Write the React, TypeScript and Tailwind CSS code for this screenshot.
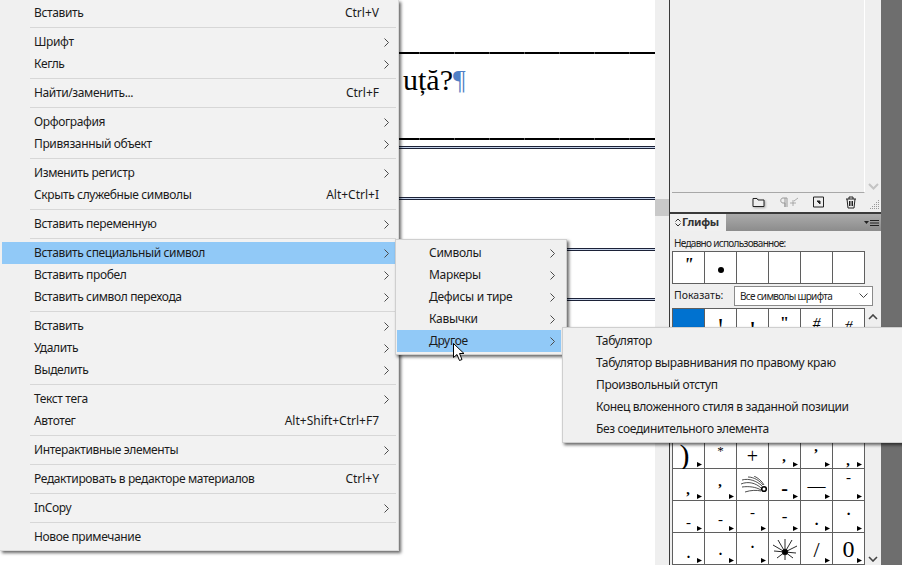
const mainMenu = [
  [{ t: "Вставить", k: "Ctrl+V" }],
  [{ t: "Шрифт", a: true }, { t: "Кегль", a: true }],
  [{ t: "Найти/заменить...", k: "Ctrl+F" }],
  [{ t: "Орфография", a: true }, { t: "Привязанный объект", a: true }],
  [{ t: "Изменить регистр", a: true }, { t: "Скрыть служебные символы", k: "Alt+Ctrl+I" }],
  [{ t: "Вставить переменную", a: true }],
  [{ t: "Вставить специальный символ", a: true, on: true }, { t: "Вставить пробел", a: true }, { t: "Вставить символ перехода", a: true }],
  [{ t: "Вставить", a: true }, { t: "Удалить", a: true }, { t: "Выделить", a: true }],
  [{ t: "Текст тега", a: true }, { t: "Автотег", k: "Alt+Shift+Ctrl+F7" }],
  [{ t: "Интерактивные элементы", a: true }],
  [{ t: "Редактировать в редакторе материалов", k: "Ctrl+Y" }],
  [{ t: "InCopy", a: true }],
  [{ t: "Новое примечание" }],
];

const subMenu = ["Символы", "Маркеры", "Дефисы и тире", "Кавычки", "Другое"];
const otherMenu = [
  "Табулятор",
  "Табулятор выравнивания по правому краю",
  "Произвольный отступ",
  "Конец вложенного стиля в заданной позиции",
  "Без соединительного элемента",
];

const Chevron = () => (
  <svg width="5" height="9" viewBox="0 0 5 9" className="shrink-0" fill="none" stroke="#4a4a4a" strokeWidth="1">
    <path d="M0.5 0.5 L4.5 4.5 L0.5 8.5" />
  </svg>
);

const Tri = () => (
  <svg width="5" height="5" viewBox="0 0 5 5" className="absolute right-[2px] bottom-[1px]">
    <path d="M0 0 L5 2.5 L0 5 Z" fill="#000" />
  </svg>
);

const Comet = () => (
  <svg width="28" height="20" viewBox="0 0 28 20" fill="none" stroke="#222" strokeWidth="0.8">
    <path d="M1 8 C8 5 16 7 21 12" />
    <path d="M2 4 C9 2 17 5 22 10" />
    <path d="M8 1 C14 1 20 5 23 9" />
    <path d="M14 0 C18 2 22 5 24 9" />
    <path d="M2 11 C9 10 16 11 21 14" />
    <path d="M5 16 C11 14 17 14 21 15" />
    <circle cx="24" cy="13" r="2.3" fill="#fff" stroke="#000" strokeWidth="1.6" />
  </svg>
);

const Burst = () => (
  <svg width="24" height="22" viewBox="0 0 24 22" stroke="#111" strokeWidth="0.9">
    <path d="M12 14 L12 1 M12 14 L5 2 M12 14 L19 2 M12 14 L0 7 M12 14 L24 8 M12 14 L1 13 M12 14 L23 15 M12 14 L4 20 M12 14 L20 20 M12 14 L12 22" />
    <circle cx="12" cy="14" r="2.8" fill="#000" />
  </svg>
);

const glyphFont = "font-['Liberation_Serif',serif] leading-none tracking-normal text-black";

const rows = [
  [
    { c: "bg-[#0072d0]" },
    { g: "!", c: "pt-[7px] text-[17px] font-bold" },
    { g: "!", c: "pt-[10px] text-[17px] font-bold" },
    { g: '"', c: "pt-[6px] text-[16px] font-bold" },
    { g: "#", c: "pt-[7px] text-[16px] italic" },
    { g: "#", c: "pt-[10px] text-[16px] italic" },
  ],
  [{}, {}, {}, {}, {}, {}],
  [{}, {}, {}, {}, {}, {}],
  [{}, {}, {}, {}, {}, {}],
  [
    { g: ")", c: "pt-[3px] pr-[8px] text-[30px] font-light", a: 1 },
    { g: "*", c: "pt-[7px] text-[13px] text-[#555]" },
    { g: "+", c: "pt-[9px] text-[20px]" },
    { g: ",", c: "pt-[12px] text-[15px] font-bold italic", a: 1 },
    { g: ",", c: "pt-[2px] text-[15px] font-bold italic", a: 1 },
    { g: ",", c: "pt-[16px] text-[15px] font-bold italic", a: 1 },
  ],
  [
    { g: ",", c: "pt-[13px] text-[15px] font-bold italic", a: 1 },
    { g: ",", c: "pt-[5px] text-[15px] font-bold italic", a: 1 },
    { s: "comet", c: "pt-[7px] pl-[2px]" },
    { g: "-", c: "pt-[9px] text-[20px] font-bold", a: 1 },
    { g: "—", c: "pt-[8px] text-[18px]", a: 1 },
    { g: "-", c: "pt-[1px] text-[15px] italic", a: 1 },
  ],
  [
    { g: "-", c: "pt-[14px] text-[15px] italic", a: 1 },
    { g: "-", c: "pt-[11px] text-[15px] italic", a: 1 },
    { g: "-", c: "pt-[4px] text-[15px] italic", a: 1 },
    { g: "-", c: "pt-[7px] text-[17px] italic", a: 1 },
    { g: ".", c: "pt-[12px] text-[15px] font-bold", a: 1 },
    { g: ".", c: "pt-[2px] text-[15px] font-bold", a: 1 },
  ],
  [
    { g: ".", c: "pt-[14px] text-[14px] font-bold", a: 1 },
    { g: ".", c: "pt-[11px] text-[14px] font-bold", a: 1 },
    { g: ".", c: "pt-[4px] text-[14px] font-bold", a: 1 },
    { s: "burst", c: "pt-[5px]" },
    { g: "/", c: "pt-[6px] text-[22px]", a: 1 },
    { g: "0", c: "pt-[4px] text-[24px]", a: 1 },
  ],
];

const Rule = () => (
  <div className="h-[2px] w-full bg-[repeating-linear-gradient(to_right,#000_0,#000_34px,#555_34px,#555_35px)]" />
);

const DoubleRule = () => (
  <div className="h-[3px] w-full border-y border-[#1c2238] bg-[#c4d2ea]" />
);

function MenuRow({ t, k, a, on }: { t: string; k?: string; a?: boolean; on?: boolean }) {
  return (
    <div className={`flex h-[22px] items-center pl-[32px] pr-[7px] ${on ? "bg-[#91c9f7]" : ""}`}>
      <span className="flex-1 whitespace-nowrap tracking-[-0.37px]">{t}</span>
      {k && <span className="mr-[10px]">{k}</span>}
      {a && <Chevron />}
    </div>
  );
}

export default function App() {
  return (
    <div className="relative flex h-[565px] w-[902px] overflow-hidden bg-white font-['Noto_Sans',sans-serif] text-[12px] text-[#1b1b1b]">
      {/* document */}
      <div className="flex w-[655px] shrink-0 flex-col">
        <div className="mt-[52px]"><Rule /></div>
        <div className="flex h-[84px] items-start pl-[403px] pt-[8px] font-['Liberation_Serif',serif] text-[30px] leading-[36px] text-black">
          <span>uță?</span>
          <span className="mt-[2px] text-[28px] leading-[32px] text-[#4f7fc6]">¶</span>
        </div>
        <Rule />
        <div className="mt-[6px]"><DoubleRule /></div>
        <div className="mt-[48px]"><DoubleRule /></div>
        <div className="mt-[48px]"><DoubleRule /></div>
        <div className="mt-[47px]"><DoubleRule /></div>
      </div>

      {/* doc scrollbar */}
      <div className="w-[14px] shrink-0 bg-[#efefef] pt-[199px]">
        <div className="h-[17px] bg-[#c9c9c9]" />
      </div>

      {/* panels */}
      <div className="flex w-[212px] shrink-0 flex-col border-l border-[#3a3a3a] bg-[#efefef]">
        <div className="flex h-[195px] pl-[2px]">
          <div className="w-[193px] border-r border-b border-r-white border-b-[#a8a8a8]" />
          <div className="flex flex-1 items-end justify-center pb-[3px]">
            <svg width="11" height="7" viewBox="0 0 11 7" fill="none" stroke="#c4c4c4" strokeWidth="2">
              <path d="M1 1 L5.5 5.5 L10 1" />
            </svg>
          </div>
        </div>
        <div className="relative flex h-[19px] items-center">
          <svg width="13" height="11" viewBox="0 0 13 11" className="ml-[82px] drop-shadow-[1px_1px_1px_rgba(0,0,0,0.3)]" fill="#eee" stroke="#222">
            <path d="M1 9.5 V1.5 H5 L6 3 H12 V9.5 Z" />
          </svg>
          <svg width="18" height="11" viewBox="0 0 18 11" className="ml-[15px]" fill="none" stroke="#999">
            <path d="M7 1 H3 C0 1 0 6 3 6 H5 V10 M5 1 V10 M7 1 V10" />
            <path d="M10 6 H16 M13 3 V9 M14 4 L18 1" strokeWidth="0.8" />
          </svg>
          <svg width="11" height="12" viewBox="0 0 11 12" className="ml-[15px]" fill="#eee" stroke="#222">
            <path d="M0.5 1 H10.5 V11 H0.5 Z" />
            <path d="M4 5 H7 V8 Z" fill="#222" />
          </svg>
          <svg width="12" height="13" viewBox="0 0 12 13" className="ml-[21px]" fill="#eee" stroke="#222">
            <path d="M1 3 H11 M4 3 V1 H8 V3 M2 3 L3 12 H9 L10 3 M4.5 5 V10 M6 5 V10 M7.5 5 V10" />
          </svg>
          <svg width="11" height="11" viewBox="0 0 11 11" className="absolute right-[1px] bottom-[2px]" fill="#999">
            <path d="M9 1h1v1H9zM7 3h1v1H7zM9 3h1v1H9zM5 5h1v1H5zM7 5h1v1H7zM9 5h1v1H9zM3 7h1v1H3zM5 7h1v1H5zM7 7h1v1H7zM9 7h1v1H9zM1 9h1v1H1zM3 9h1v1H3zM5 9h1v1H5zM7 9h1v1H7zM9 9h1v1H9z" />
          </svg>
        </div>
        <div className="h-[2px] bg-[#3a3a3a]" />
        <div className="flex h-[18px] bg-gradient-to-b from-[#ababab] to-[#8c8c8c]">
          <div className="flex w-[56px] items-center gap-[1px] bg-[#f0f0f0] pl-[5px] text-[11px] font-bold tracking-[-0.3px] text-[#333]">
            <svg width="6" height="9" viewBox="0 0 6 9" fill="none" stroke="#333">
              <path d="M0.5 3.5 L3 1 L5.5 3.5 M0.5 5.5 L3 8 L5.5 5.5" />
            </svg>
            Глифы
          </div>
          <div className="flex flex-1 items-center justify-end gap-[1px] pr-[2px]">
            <svg width="5" height="3" viewBox="0 0 5 3"><path d="M0 0 H5 L2.5 3 Z" fill="#222" /></svg>
            <svg width="9" height="8" viewBox="0 0 9 8" stroke="#222"><path d="M0 1.5 H9 M0 4 H9 M0 6.5 H9" /></svg>
          </div>
        </div>
        <div className="flex h-[20px] items-end pl-[4px] pb-[1px] text-[10px] leading-[14px] tracking-[-0.7px] text-[#222]">
          Недавно использованное:
        </div>
        <div className="ml-[2px] grid w-[193px] grid-cols-6 border-t border-l border-[#5f5f5f]">
          <div className={`flex h-[32px] justify-center border-r border-b border-[#5f5f5f] bg-white pt-[4px] text-[18px] font-bold italic ${glyphFont}`}>"</div>
          <div className="flex h-[32px] items-start justify-center border-r border-b border-[#5f5f5f] bg-white pt-[15px]">
            <div className="h-[6px] w-[6px] rounded-full bg-black" />
          </div>
          {[0, 1, 2, 3].map((i) => (
            <div key={i} className="h-[32px] border-r border-b border-[#5f5f5f] bg-white" />
          ))}
        </div>
        <div className="flex h-[24px] items-center pl-[4px] text-[10px] text-[#222]">
          <span className="w-[60px] text-[10.5px]">Показать:</span>
          <div className="flex h-[20px] w-[139px] items-center justify-between border border-[#8a8a8a] bg-white pl-[5px] pr-[4px] tracking-[-0.7px]">
            Все символы шрифта
            <svg width="9" height="6" viewBox="0 0 9 6" fill="none" stroke="#444"><path d="M0.5 0.5 L4.5 4.5 L8.5 0.5" /></svg>
          </div>
        </div>
        <div className="flex">
          <div className="ml-[2px] grid w-[193px] shrink-0 grid-cols-6 border-t border-l border-[#5f5f5f]">
            {rows.flat().map((cell: any, i) => (
              <div key={i} className={`relative flex h-[32px] justify-center border-r border-b border-[#5f5f5f] ${i === 0 ? "" : "bg-white"} ${glyphFont} ${cell.c ?? ""}`}>
                {cell.g}
                {cell.s === "comet" && <Comet />}
                {cell.s === "burst" && <Burst />}
                {cell.a && <Tri />}
              </div>
            ))}
          </div>
          <div className="flex h-[254px] flex-1 flex-col items-center justify-between pt-[6px]">
            <svg width="10" height="6" viewBox="0 0 10 6" fill="none" stroke="#444" strokeWidth="1.6"><path d="M1 5 L5 1 L9 5" /></svg>
            <svg width="10" height="6" viewBox="0 0 10 6" fill="none" stroke="#444" strokeWidth="1.6"><path d="M1 1 L5 5 L9 1" /></svg>
          </div>
        </div>
      </div>

      <div className="flex-1 bg-[#6e6e6e]" />

      {/* context menu */}
      <div className="absolute top-0 left-0 w-[399px] border-r border-b border-[#d9d9d9] bg-[linear-gradient(to_right,#f0f0f0_30px,#f2f2f2_30px)] pt-[2px] pr-[2px] pb-[2px] pl-[2px] shadow-[2px_2px_3px_rgba(0,0,0,0.6)]">
        {mainMenu.map((group, i) => (
          <div key={i}>
            {i > 0 && (
              <div className="flex h-[7px] items-center pl-[28px]">
                <div className="h-px w-full bg-[#d7d7d7]" />
              </div>
            )}
            {group.map((item) => (
              <MenuRow key={item.t} {...item} />
            ))}
          </div>
        ))}
      </div>

      {/* first submenu */}
      <div className="absolute top-[239px] left-[395px] w-[172px] border border-[#cfcfcf] bg-[#f0f0f0] py-[2px] pr-[5px] pl-[1px] shadow-[2px_2px_3px_rgba(0,0,0,0.6)]">
        {subMenu.map((t, i) => (
          <div key={t} className={`flex h-[22px] items-center pr-[6px] pl-[32px] ${i === 4 ? "bg-[#91c9f7]" : ""}`}>
            <span className="flex-1 tracking-[-0.3px]">{t}</span>
            <Chevron />
          </div>
        ))}
      </div>

      {/* second submenu */}
      <div className="absolute top-[327px] left-[562px] w-[345px] border border-[#cfcfcf] bg-[#f0f0f0] p-[2px] shadow-[2px_2px_3px_rgba(0,0,0,0.6)]">
        {otherMenu.map((t) => (
          <div key={t} className="flex h-[22px] items-center pl-[31px] tracking-[-0.35px]">{t}</div>
        ))}
      </div>

      {/* cursor */}
      <svg width="14" height="20" viewBox="0 0 14 20" className="absolute top-[343px] left-[453px]" fill="#fff" stroke="#000" strokeWidth="1">
        <path d="M0.5 0.5 V14.5 L4 11.5 L6.5 17.5 L9 16.5 L6.5 10.5 H11 Z" />
      </svg>
    </div>
  );
}
